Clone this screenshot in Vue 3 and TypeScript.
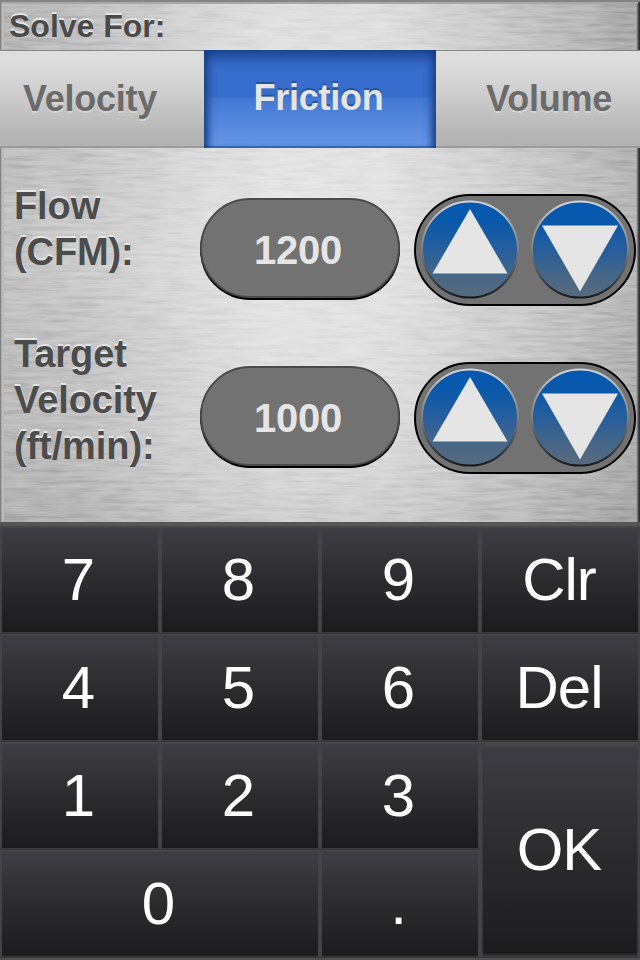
<script setup lang="ts">
import { ref } from 'vue'

type Mode = 'Velocity' | 'Friction' | 'Volume'
interface Field { id: string; lines: string[]; value: number }
interface Key { label: string; area: string }

const modes: Mode[] = ['Velocity', 'Friction', 'Volume']
const active = ref<Mode>('Friction')
const fields = ref<Field[]>([
  { id: 'flow', lines: ['Flow', '(CFM):'], value: 1200 },
  { id: 'target', lines: ['Target', 'Velocity', '(ft/min):'], value: 1000 },
])
const selected = ref(0)

const keys: Key[] = [
  { label: '7', area: 'seven' }, { label: '8', area: 'eight' }, { label: '9', area: 'nine' }, { label: 'Clr', area: 'clear' },
  { label: '4', area: 'four' }, { label: '5', area: 'five' }, { label: '6', area: 'six' }, { label: 'Del', area: 'delete' },
  { label: '1', area: 'one' }, { label: '2', area: 'two' }, { label: '3', area: 'three' }, { label: 'OK', area: 'ok' },
  { label: '0', area: 'zero' }, { label: '.', area: 'point' },
]

function step(field: Field, amount: number) {
  field.value = Math.max(0, field.value + amount)
}

function press(label: string) {
  const field = fields.value[selected.value]
  if (label === 'Clr') field.value = 0
  else if (label === 'Del') field.value = Math.floor(field.value / 10)
  else if (/^\d$/.test(label)) field.value = field.value * 10 + Number(label)
}
</script>

<template>
  <main class="screen">
    <svg class="metal" width="640" height="524" viewBox="0 0 640 524" aria-hidden="true">
      <defs>
        <linearGradient id="sheen" x1="0" y1="0" x2="640" y2="0" gradientUnits="userSpaceOnUse">
          <stop offset="0" stop-color="#b6b6b6" />
          <stop offset=".12" stop-color="#bebebe" />
          <stop offset=".3" stop-color="#d4d4d4" />
          <stop offset=".42" stop-color="#e0e0e0" />
          <stop offset=".6" stop-color="#dedede" />
          <stop offset=".82" stop-color="#c4c4c4" />
          <stop offset="1" stop-color="#a8a8a8" />
        </linearGradient>
        <linearGradient id="shade" x1="0" y1="0" x2="0" y2="524" gradientUnits="userSpaceOnUse">
          <stop offset="0" stop-color="#fff" stop-opacity="0" />
          <stop offset=".5" stop-color="#fff" stop-opacity=".2" />
          <stop offset=".7" stop-color="#eee" stop-opacity=".1" />
          <stop offset="1" stop-color="#999" stop-opacity=".25" />
        </linearGradient>
        <filter id="brush" x="0" y="0" width="100%" height="100%" color-interpolation-filters="sRGB">
          <feTurbulence type="fractalNoise" baseFrequency=".03 .26" numOctaves="3" seed="23" />
          <feColorMatrix values="1 0 0 0 0  1 0 0 0 0  1 0 0 0 0  0 0 0 0 1" />
        </filter>
      </defs>
      <rect width="640" height="524" fill="url(#sheen)" />
      <rect width="640" height="524" fill="url(#shade)" />
      <rect class="grain" width="640" height="524" filter="url(#brush)" />
      <path d="M0 1H640" stroke="#858585" stroke-width="2" />
      <path d="M0 3H637" stroke="#a8a8a8" stroke-width="2" />
      <path d="M.5 0V524" stroke="#808080" stroke-width="1.5" />
      <path d="M3 3V524" stroke="#bbb" stroke-width="2" />
      <path d="M637.5 4V524" stroke="#777" stroke-width="1.4" />
      <path d="M639.2 2V524" stroke="#303030" stroke-width="2" />
    </svg>

    <h1 class="title">Solve For:</h1>

    <nav class="tabs">
      <button v-for="mode in modes" :key="mode" class="tab" :class="{ active: mode === active }" @click="active = mode">
        <span>{{ mode }}</span>
      </button>
    </nav>

    <section class="fields">
      <div v-for="(field, index) in fields" :key="field.id" class="field">
        <div class="label"><span v-for="line in field.lines" :key="line">{{ line }}</span></div>
        <button class="value" @click="selected = index">{{ field.value }}</button>
        <div class="stepper">
          <button class="round" aria-label="Increase" @click="step(field, 10)">
            <svg width="98" height="100" viewBox="0 0 98 100">
              <defs>
                <linearGradient id="face" x1="0" y1="0" x2="0" y2="1">
                  <stop offset="0" stop-color="#0458b0" /><stop offset=".2" stop-color="#0858ab" />
                  <stop offset=".5" stop-color="#265e9c" /><stop offset=".75" stop-color="#446688" /><stop offset="1" stop-color="#586a7c" />
                </linearGradient>
                <linearGradient id="rim" x1="0" y1="0" x2="0" y2="1">
                  <stop offset="0" stop-color="#d0d4d8" /><stop offset=".3" stop-color="#9a9a9a" />
                  <stop offset=".55" stop-color="#777" /><stop offset=".8" stop-color="#404346" /><stop offset="1" stop-color="#171b1f" />
                </linearGradient>
              </defs>
              <circle cx="49" cy="49.500" r="48" fill="url(#face)" stroke="url(#rim)" stroke-width="2" />
              <path d="M49 9L86.500 73.500H11.500Z" fill="#e5e5e5" />
            </svg>
          </button>
          <button class="round" aria-label="Decrease" @click="step(field, -10)">
            <svg width="98" height="100" viewBox="0 0 98 100">
              <circle cx="49" cy="49.500" r="48" fill="url(#face)" stroke="url(#rim)" stroke-width="2" />
              <path d="M11 25.500H87L49 91.500Z" fill="#e5e5e5" />
            </svg>
          </button>
        </div>
      </div>
    </section>

    <section class="keypad">
      <button v-for="key in keys" :key="key.label" class="key" :class="key.area" @click="press(key.label)">
        <span>{{ key.label }}</span>
      </button>
    </section>
  </main>
</template>

<style>
body { margin: 0; }
</style>

<style scoped>
.screen {
  position: relative;
  isolation: isolate;
  display: flex;
  flex-direction: column;
  width: 640px;
  height: 960px;
  overflow: hidden;
  font-family: "Liberation Sans", Arial, sans-serif;
}
.metal { position: absolute; inset: 0; z-index: -1; }
.grain { mix-blend-mode: soft-light; opacity: .48; }
button {
  box-sizing: border-box;
  margin: 0;
  padding: 0;
  border: 0;
  font-family: inherit;
}
.title {
  box-sizing: border-box;
  flex: none;
  height: 50px;
  margin: 0;
  padding: 7px 0 0 9px;
  color: #4a4a4a;
  font-size: 32px;
  line-height: 38px;
  text-shadow: 0 -2px 0 #e6e6e6;
}
.tabs {
  flex: none;
  display: grid;
  grid-template-columns: 204px 232px 204px;
  height: 98px;
}
.tab {
  border-top: 1px solid #858585;
  border-bottom: 2px solid #9b9b9b;
  background: linear-gradient(#dfdfdf, #d8d8d8 25%, #b4b4b4 90%, #b2b2b2);
  color: #6b6b6b;
  font-size: 36px;
  font-weight: 700;
  letter-spacing: -.25px;
  text-shadow: 0 2px 0 #d4d4d4;
}
.tab:first-child { padding-right: 24px; }
.tab:last-child { padding-left: 22px; }
.tab.active {
  padding-right: 3px;
  padding-bottom: 2px;
  border: 0;
  background: linear-gradient(#376dcc 0 48%, #4378d2 49%, #6796e5);
  box-shadow: inset 0 8px 14px -2px #173d83, inset 8px 0 7px -4px #204a93, inset -8px 0 7px -4px #204a93, inset 0 -2px 1px #3b6fc1;
  color: #e5e5e5;
  text-shadow: 0 -2px 0 #285399;
}
.fields {
  flex: none;
  box-sizing: border-box;
  height: 374px;
  padding: 35px 4px 0 14px;
}
.field {
  display: grid;
  grid-template-columns: 186px 200px 222px;
  height: 148px;
}
.label {
  display: flex;
  flex-direction: column;
  color: #4c4c4c;
  font-size: 38px;
  font-weight: 700;
  letter-spacing: -.1px;
  line-height: 46px;
  text-shadow: 0 -2px 0 #e6e6e6;
}
.value {
  height: 100px;
  margin-top: 15px;
  padding: 4px 4px 0 0;
  border: 2px solid #4a4a4a;
  border-radius: 50px;
  background: #727272;
  box-shadow: 0 2px 0 #000;
  color: #e5e5e5;
  font-size: 40px;
  font-weight: 700;
  letter-spacing: -.3px;
}
.stepper {
  box-sizing: border-box;
  display: flex;
  justify-content: space-between;
  width: 222px;
  height: 112px;
  margin: 11px 0 0 14px;
  padding: 4px 5px;
  border: 2px solid #000;
  border-radius: 56px;
  background: #727272;
}
.field + .field .value { margin-top: 35px; }
.field + .field .stepper { margin-top: 31px; }
.round { width: 98px; height: 100px; background: none; }
.round svg { display: block; }
.keypad {
  flex: none;
  box-sizing: border-box;
  display: grid;
  grid-template-columns: repeat(4, 160px);
  grid-template-rows: repeat(4, 108px);
  grid-template-areas:
    "seven eight nine clear"
    "four five six delete"
    "one two three ok"
    "zero zero point ok";
  height: 438px;
  border-top: 4px solid #565656;
  border-bottom: 2px solid #515151;
  background: #444;
}
.key {
  padding-right: 3px;
  border: 2px solid #434345;
  border-top-color: #464649;
  border-bottom-color: #393939;
  background: linear-gradient(#3e3d43, #2c2c2f 50%, #1c1c1d) padding-box;
  color: #fff;
  font-size: 60px;
  line-height: 68px;
}
.seven { grid-area: seven; } .eight { grid-area: eight; } .nine { grid-area: nine; } .clear { grid-area: clear; }
.four { grid-area: four; } .five { grid-area: five; } .six { grid-area: six; } .delete { grid-area: delete; }
.one { grid-area: one; } .two { grid-area: two; } .three { grid-area: three; }
.zero { grid-area: zero; } .point { grid-area: point; }
.clear, .delete, .ok { padding-right: 2px; letter-spacing: -1px; }
.ok {
  grid-area: ok;
  box-shadow: inset 0 3px 3px #47474a, inset 0 -2px 2px #343436;
}
</style>
